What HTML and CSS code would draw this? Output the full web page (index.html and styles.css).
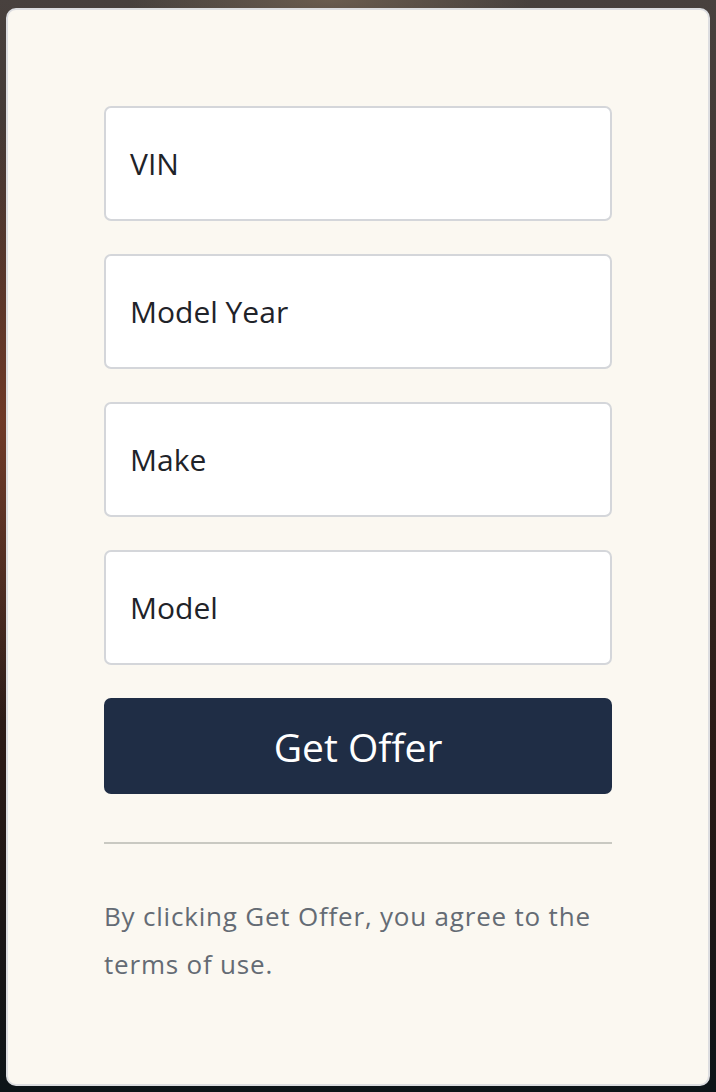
FILE: index.html
```html
<!DOCTYPE html>
<html lang="en">
<head>
<meta charset="utf-8">
<title>Get Offer</title>
<link rel="stylesheet" href="styles.css">
</head>
<body>
<div class="card">
  <form class="offer-form">
    <div class="field">VIN</div>
    <div class="field">Model Year</div>
    <div class="field">Make</div>
    <div class="field">Model</div>
    <div class="submit">Get Offer</div>
  </form>
  <hr class="divider">
  <p class="terms">By clicking Get Offer, you agree to the terms of use.</p>
</div>
</body>
</html>
```

FILE: styles.css
```css
html, body {
  margin: 0;
  padding: 0;
}
body {
  width: 716px;
  height: 1092px;
  overflow: hidden;
  font-family: "Open Sans", "Noto Sans", sans-serif;
  background:
    radial-gradient(ellipse 120px 300px at 0px 420px, rgba(120,60,40,0.85), rgba(0,0,0,0) 100%),
    radial-gradient(ellipse 200px 40px at 330px 0px, rgba(110,95,80,0.9), rgba(0,0,0,0) 100%),
    linear-gradient(180deg, #48413e 0%, #3a2a24 40%, #2a1a16 70%, #0d1418 100%);
  padding: 8px 6px 0 6px;
  box-sizing: border-box;
}
.card {
  width: 704px;
  height: 1078px;
  box-sizing: border-box;
  background: #fbf8f1;
  border: 2px solid #dcdde0;
  border-radius: 10px;
  padding: 96px;
  display: flex;
  flex-direction: column;
}
.offer-form {
  display: flex;
  flex-direction: column;
  gap: 33px;
}
.field {
  height: 115px;
  box-sizing: border-box;
  background: #ffffff;
  border: 2px solid #d4d6da;
  border-radius: 7px;
  padding: 0 24px;
  display: flex;
  align-items: center;
  font-size: 30px;
  color: #1f2329;
}
.submit {
  height: 96px;
  background: #1f2d45;
  border-radius: 7px;
  display: flex;
  align-items: center;
  justify-content: center;
  color: #ffffff;
  font-size: 39px;
}
.divider {
  margin: 48px 0 0 0;
  border: 0;
  height: 2px;
  background: #c9c9c2;
}
.terms {
  margin: 48px 0 0 0;
  font-size: 26px;
  letter-spacing: 0.8px;
  line-height: 48px;
  color: #646b74;
}
```
